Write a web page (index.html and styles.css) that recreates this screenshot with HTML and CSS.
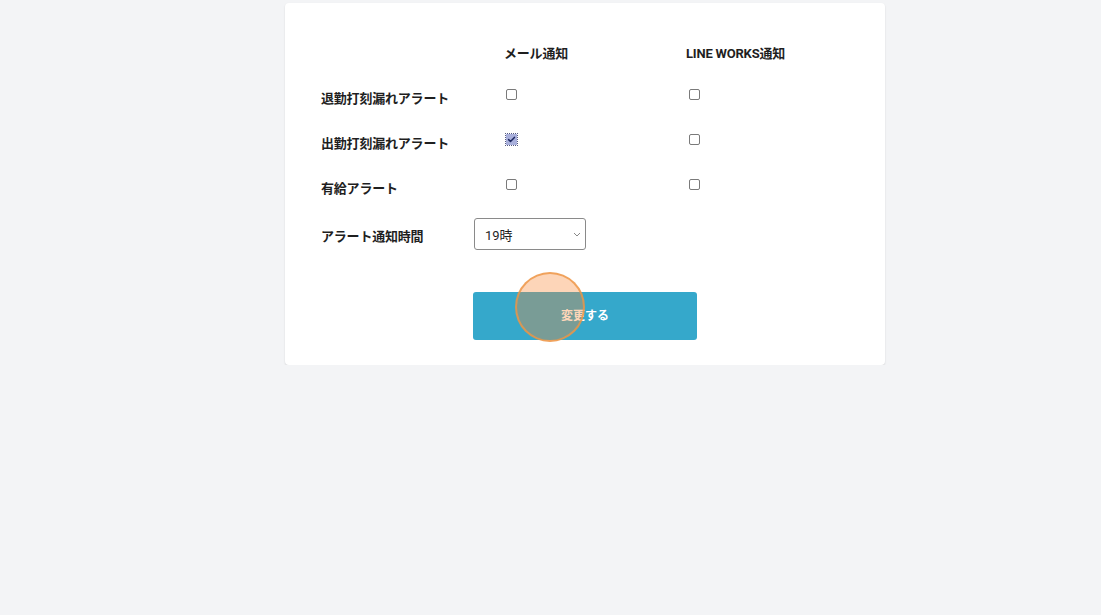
FILE: index.html
```html
<!DOCTYPE html>
<html lang="ja">
<head>
<meta charset="utf-8">
<link rel="stylesheet" href="styles.css">
</head>
<body>
<div class="page">
  <div class="card">
    <div class="grid">
      <div class="cell head"></div>
      <div class="cell head">メール通知</div>
      <div class="cell head">LINE WORKS通知</div>

      <div class="cell label">退勤打刻漏れアラート</div>
      <div class="cell"><span class="cb"></span></div>
      <div class="cell"><span class="cb far"></span></div>

      <div class="cell label">出勤打刻漏れアラート</div>
      <div class="cell"><span class="cb checked"><svg viewBox="0 0 11 11" width="11" height="11"><path d="M2.6 5.6 L4.5 7.4 L8.4 3.4" fill="none" stroke="#1d2760" stroke-width="1.5" stroke-linecap="round" stroke-linejoin="round"/></svg></span></div>
      <div class="cell"><span class="cb far"></span></div>

      <div class="cell label">有給アラート</div>
      <div class="cell"><span class="cb"></span></div>
      <div class="cell"><span class="cb far"></span></div>
    </div>
    <div class="time-row">
      <div class="label time-label">アラート通知時間</div>
      <div class="select">
        <span>19時</span>
        <svg width="8" height="5" viewBox="0 0 8 5"><path d="M1 1 L4 4 L7 1" fill="none" stroke="#888" stroke-width="1"/></svg>
      </div>
    </div>
    <div class="actions">
      <div class="btn">変更する<span class="tap"></span></div>
    </div>
  </div>
</div>
</body>
</html>
```
FILE: styles.css
```css
html, body {
  margin: 0;
  padding: 0;
  background: #f3f4f6;
  font-family: Roboto, "Noto Sans CJK JP", sans-serif;
  color: #1f1f1f;
}
.page {
  padding-top: 3px;
  padding-left: 285px;
}
.card {
  width: 600px;
  box-sizing: border-box;
  background: #fff;
  border-radius: 4px;
  box-shadow: 0 1px 2px rgba(0,0,0,0.12);
  padding: 27px 36px 25px 36px;
}
.grid {
  display: grid;
  grid-template-columns: 183px 182px 1fr;
  grid-auto-rows: 45px;
}
.cell {
  display: flex;
  align-items: center;
  font-size: 13px;
  letter-spacing: -0.2px;
}
.head {
  font-weight: 700;
}
.label {
  font-weight: 700;
  font-size: 13px;
  letter-spacing: -0.2px;
}
.cb {
  display: block;
  width: 9px;
  height: 9px;
  border: 1px solid #7a7a7a;
  border-radius: 2px;
  margin-left: 2px;
  margin-bottom: 7px;
  background: #fff;
}
.cb.far {
  margin-left: 3px;
}
.cb.checked {
  width: 11px;
  height: 11px;
  border: none;
  border-radius: 0;
  background: #a9b0dc;
  outline: 1px dotted #555a80;
}
.cb.checked svg {
  display: block;
}
.time-row {
  display: flex;
  align-items: center;
  height: 48px;
}
.time-label {
  width: 153px;
  padding-top: 2px;
}
.select {
  width: 112px;
  height: 32px;
  box-sizing: border-box;
  border: 1px solid #8a8a8a;
  border-radius: 3px;
  display: flex;
  align-items: center;
  justify-content: space-between;
  padding: 0 4px 0 10px;
  font-size: 13px;
}
.actions {
  display: flex;
  justify-content: center;
  margin-top: 34px;
}
.btn {
  position: relative;
  width: 224px;
  height: 48px;
  box-sizing: border-box;
  padding-bottom: 4px;
  background: #35a8cb;
  border-radius: 3px;
  color: #fff;
  font-weight: 700;
  font-size: 12px;
  display: flex;
  align-items: center;
  justify-content: center;
}
.tap {
  position: absolute;
  left: 42px;
  top: -20px;
  width: 66px;
  height: 66px;
  border-radius: 50%;
  background: rgba(249,135,52,0.35);
  border: 2px solid rgba(238,150,70,0.8);
}
```
